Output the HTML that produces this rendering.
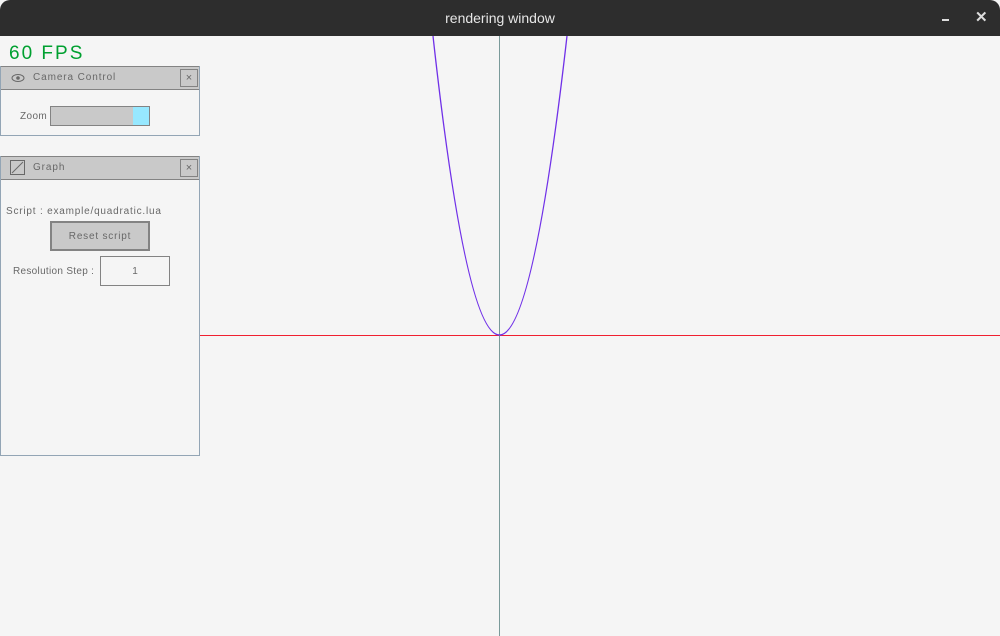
<!DOCTYPE html>
<html><head><style>
body{margin:0;width:1000px;height:636px;background:#f5f5f5;overflow:hidden;position:relative;font-family:"Liberation Sans",sans-serif;}
.tb{position:absolute;left:0;top:0;width:1000px;height:36px;background:#2d2d2d;border-radius:10px 10px 0 0;color:#e6e6e6;font-family:"Liberation Sans",sans-serif;font-size:14px;text-align:center;line-height:36px;}
.abs{position:absolute;}
.panel{position:absolute;left:0;width:198px;border:1px solid #93a5b5;background:#f5f5f5;}
.hdr{height:22px;background:#c9c9c9;border-bottom:1px solid #838383;border-top:1px solid #838383;margin-top:-1px;position:relative;}
.hdr span{position:absolute;left:32px;top:5px;font-size:10px;color:#686868;letter-spacing:0.9px;}
.x{position:absolute;right:1px;top:2px;width:16px;height:16px;border:1px solid #838383;font-size:11px;color:#686868;text-align:center;line-height:16px;}
.t{position:absolute;font-size:10px;color:#686868;white-space:nowrap;letter-spacing:0.8px;}
</style></head><body>
<div class="tb">rendering window</div>
<div class="abs" style="left:942px;top:19px;width:7px;height:2px;background:#ddd"></div>
<div class="abs" style="left:975px;top:8px;color:#ddd;font:bold 15px 'Liberation Sans',sans-serif">✕</div>
<div class="abs" style="left:200px;top:335px;width:800px;height:1px;background:#f02030"></div>
<div class="abs" style="left:499px;top:36px;width:1px;height:600px;background:#7a9a9a"></div>
<svg class="abs" style="left:0;top:0" width="1000" height="636">
<path d="M433 36 Q499 634 567 36" fill="none" stroke="#7030e8" stroke-width="1.3"/>
</svg>
<div class="abs" style="left:9px;top:44px;font-size:19px;line-height:20px;color:#00a030;letter-spacing:2px">60 FPS</div>
<div class="panel" style="top:66px;height:68px">
<div class="hdr"><svg class="abs" style="left:10px;top:6px" width="16" height="10"><ellipse cx="7" cy="5" rx="6" ry="3.5" fill="none" stroke="#686868"/><circle cx="7" cy="5" r="1.8" fill="#686868"/></svg><span>Camera Control</span><div class="x">×</div></div>
<div class="t" style="left:19px;top:44px;letter-spacing:0.4px">Zoom</div>
<div class="abs" style="left:49px;top:39px;width:98px;height:18px;border:1px solid #838383;background:#c9c9c9"><div class="abs" style="right:0;top:0;width:16px;height:18px;background:#97e8ff"></div></div>
</div>
<div class="panel" style="top:156px;height:298px">
<div class="hdr"><svg class="abs" style="left:9px;top:3px" width="16" height="16"><rect x="0.5" y="0.5" width="14" height="14" fill="none" stroke="#686868"/><line x1="2" y1="13" x2="13" y2="2" stroke="#686868"/></svg><span>Graph</span><div class="x">×</div></div>
<div class="t" style="left:5px;top:49px">Script : example/quadratic.lua</div>
<div class="abs" style="left:49px;top:64px;width:96px;height:26px;border:2px solid #838383;background:#c9c9c9;font-size:10px;color:#686868;text-align:center;line-height:27px;letter-spacing:0.8px">Reset script</div>
<div class="t" style="left:12px;top:109px;letter-spacing:0.3px">Resolution Step :</div>
<div class="abs" style="left:99px;top:99px;width:68px;height:28px;border:1px solid #838383;font-size:10px;color:#686868;text-align:center;line-height:29px">1</div>
</div>
</body></html>
